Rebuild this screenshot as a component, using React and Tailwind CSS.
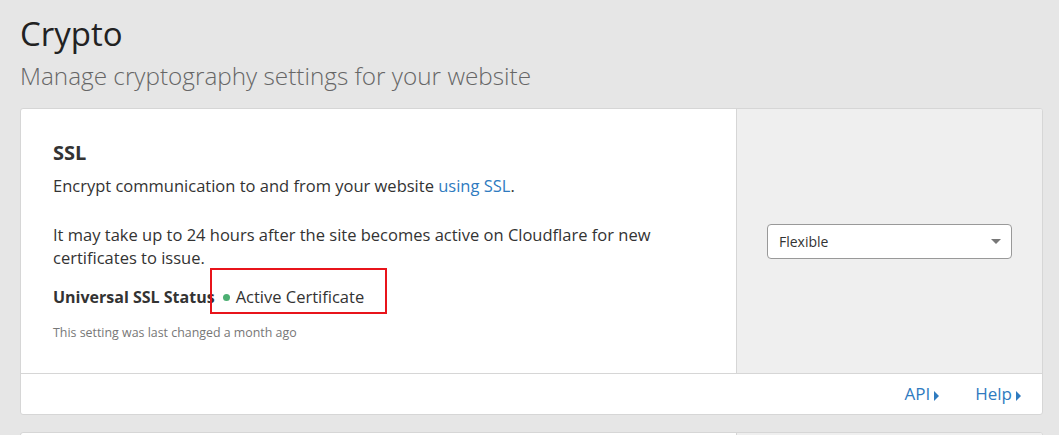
import React from "react";

function Caret() {
  return <span className="ml-[4px] inline-block border-y-[5px] border-l-[5px] border-y-transparent border-l-[#2f7bbf] align-middle" />;
}

export default function App() {
  return (
    <div className="min-h-screen bg-[#e6e6e6] pl-5 pr-4 pt-[12px] font-['Open_Sans','Liberation_Sans',sans-serif] text-[#333]">
      <h1 className="text-[33px] leading-[44px] text-[#222]">Crypto</h1>
      <p className="mt-[4px] text-[24.3px] font-light leading-[32px] text-[#666]">Manage cryptography settings for your website</p>

      <div className="mt-[16px] overflow-hidden rounded-[3px] border border-[#d6d6d6] bg-white">
        <div className="flex">
          <div className="relative w-[716px] border-r border-[#d6d6d6] px-[32px] pt-[30px] pb-[32px]">
            <h2 className="text-[20px] font-bold leading-[28px] text-[#333]">SSL</h2>
            <p className="mt-[7px] text-[16.5px] leading-[24px]">
              Encrypt communication to and from your website <a className="text-[#2f7bbf]">using SSL</a>.
            </p>
            <p className="mt-[25px] pr-[8px] text-[16.5px] leading-[23px]">
              It may take up to 24 hours after the site becomes active on Cloudflare for new certificates to issue.
            </p>
            <div className="mt-[16px] flex items-center text-[16.5px] leading-[24px]">
              <span className="text-[16px] font-bold">Universal SSL Status</span>
              <span className="ml-[8px] mr-[6px] h-[7px] w-[7px] rounded-full bg-[#4caf72]" />
              <span>Active Certificate</span>
            </div>
            <p className="mt-[15px] text-[12.4px] leading-[17px] text-[#777]">This setting was last changed a month ago</p>
            <div className="absolute left-[189px] top-[159px] h-[46px] w-[177px] border-2 border-[#e8141b]" />
          </div>
          <div className="flex flex-1 items-center bg-[#efefef] pl-[30px] pr-[30px]">
            <div className="flex h-[35px] w-full items-center justify-between rounded-[4px] border border-[#999] bg-white pl-[11px] pr-[10px] text-[14px] text-[#333]">
              <span>Flexible</span>
              <span className="border-x-[5px] border-t-[5px] border-x-transparent border-t-[#777]" />
            </div>
          </div>
        </div>
        <div className="flex h-[41px] items-center justify-end gap-[36px] border-t border-[#d6d6d6] pr-[21px] text-[17px] text-[#2f7bbf]">
          <span>API<Caret /></span>
          <span>Help<Caret /></span>
        </div>
      </div>

      <div className="mt-[17px] flex h-[40px] overflow-hidden rounded-t-[3px] border border-[#d6d6d6] bg-white">
        <div className="w-[716px] border-r border-[#d6d6d6]" />
        <div className="flex-1 bg-[#efefef]" />
      </div>
    </div>
  );
}
